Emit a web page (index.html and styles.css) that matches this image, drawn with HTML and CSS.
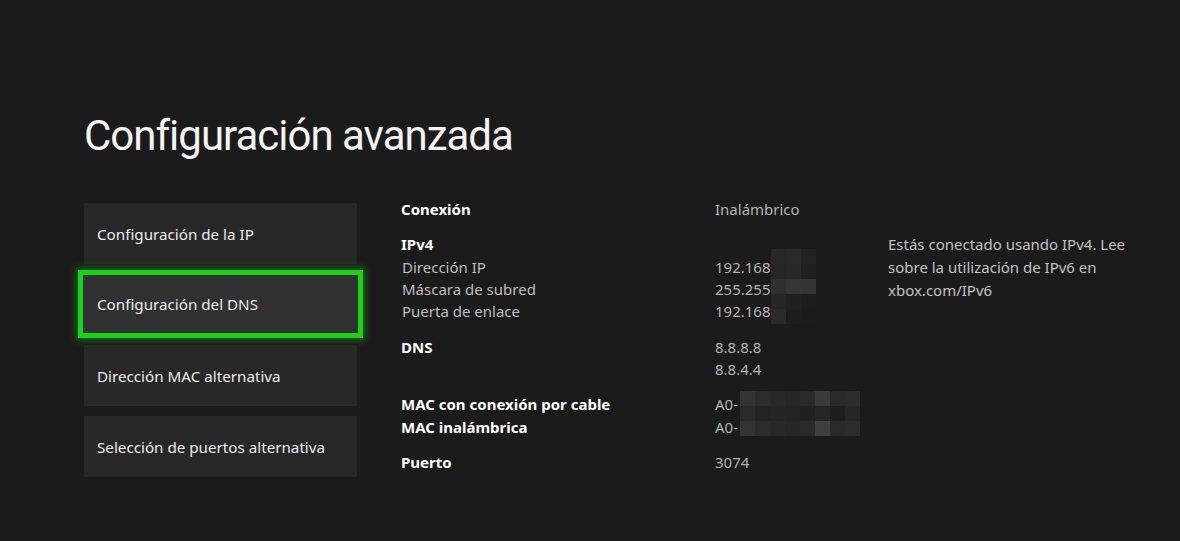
FILE: index.html
```html
<!DOCTYPE html>
<html lang="es">
<head>
<meta charset="utf-8">
<title>Configuración avanzada</title>
<link rel="stylesheet" href="styles.css">
</head>
<body>
<main class="page">
  <h1 class="title">Configuración avanzada</h1>
  <div class="content">
    <nav class="menu">
      <div class="item">Configuración de la IP</div>
      <div class="item selected">Configuración del DNS</div>
      <div class="item">Dirección MAC alternativa</div>
      <div class="item">Selección de puertos alternativa</div>
    </nav>
    <section class="details">
      <div class="group">
        <div class="label strong">Conexión</div>
        <div class="value">Inalámbrico</div>
      </div>
      <div class="group ipv4">
        <div class="label strong">IPv4</div>
        <div class="note">Estás conectado usando IPv4. Lee sobre la utilización de IPv6 en xbox.com/IPv6</div>
        <div class="label sub">Dirección IP</div>
        <div class="value">192.168</div>
        <div class="label sub">Máscara de subred</div>
        <div class="value">255.255</div>
        <div class="label sub">Puerta de enlace</div>
        <div class="value">192.168</div>
        <div class="mosaic mosaic-ip">
          <i class="m28"></i><i class="m2a"></i><i class="m22"></i>
          <i class="m26"></i><i class="m28"></i><i class="m1f"></i>
          <i class="m30"></i><i class="m36"></i><i class="m35"></i>
          <i class="m26"></i><i class="m20"></i><i class="m1d"></i>
          <i class="m2a"></i><i class="m1e"></i><i class="m1c"></i>
        </div>
      </div>
      <div class="group">
        <div class="label strong">DNS</div>
        <div class="value">8.8.8.8</div>
        <div class="label"></div>
        <div class="value">8.8.4.4</div>
      </div>
      <div class="group mac">
        <div class="label strong">MAC con conexión por cable</div>
        <div class="value">A0-</div>
        <div class="label strong">MAC inalámbrica</div>
        <div class="value">A0-</div>
        <div class="mosaic mosaic-mac">
          <i class="m33"></i><i class="m2c"></i><i class="m29"></i><i class="m26"></i><i class="m2a"></i><i class="m3a"></i><i class="m2a"></i><i class="m2c"></i>
          <i class="m2a"></i><i class="m22"></i><i class="m25"></i><i class="m24"></i><i class="m20"></i><i class="m26"></i><i class="m1e"></i><i class="m26"></i>
          <i class="m33"></i><i class="m2c"></i><i class="m29"></i><i class="m26"></i><i class="m2a"></i><i class="m3f"></i><i class="m2a"></i><i class="m2c"></i>
        </div>
      </div>
      <div class="group">
        <div class="label strong">Puerto</div>
        <div class="value">3074</div>
      </div>
    </section>
  </div>
</main>
</body>
</html>
```

FILE: styles.css
```css
html, body {
  margin: 0;
  padding: 0;
  background: #1b1b1b;
  height: 100%;
}
body {
  font-family: "Noto Sans", "Open Sans", sans-serif;
  color: #fff;
  overflow: hidden;
}
.page {
  padding: 110px 0 0 84px;
}
.title {
  margin: 0;
  font-family: Roboto, "Noto Sans", sans-serif;
  font-weight: 400;
  font-size: 42px;
  line-height: 52px;
  color: #f4f4f4;
  letter-spacing: -1px;
}
.content {
  display: flex;
  gap: 44px;
  margin-top: 41px;
}
.menu {
  width: 273px;
  display: flex;
  flex-direction: column;
  gap: 10px;
  flex: none;
}
.item {
  height: 61px;
  box-sizing: border-box;
  background: #282828;
  display: flex;
  align-items: center;
  padding-left: 13px;
  font-size: 15.2px;
  color: #ececec;
}
.item.selected {
  height: 68px;
  margin: -4px -6px -3px;
  padding-left: 14px;
  border: 5px solid #19d219;
  background: #313131;
  box-shadow: 0 0 7px 2px rgba(10, 200, 10, 0.5);
}
.details {
  margin-top: -5px;
  font-size: 15px;
  line-height: 22.4px;
  width: 280px;
}
.group {
  display: grid;
  grid-template-columns: 314px 173px 260px;
  margin-bottom: 12.8px;
  position: relative;
}
.label.strong {
  font-weight: 700;
  color: #fff;
}
.label.sub {
  color: #bebebe;
  padding-left: 1px;
}
.label { grid-column: 1; }
.value {
  grid-column: 2;
  color: #b3b3b3;
}
.note {
  grid-column: 3;
  grid-row: 1 / span 4;
  color: #c2c2c2;
  line-height: 23px;
}
.mosaic {
  position: absolute;
  display: grid;
  grid-auto-rows: 15px;
}
.mosaic i { display: block; }
.mosaic-ip {
  left: 370px;
  top: 16px;
  grid-template-columns: repeat(3, 15px);
}
.mosaic-mac {
  left: 339px;
  top: -2px;
  grid-template-columns: repeat(8, 15px);
}
.m1c { background: #1c1c1c; }
.m1d { background: #1d1d1d; }
.m1e { background: #1e1e1e; }
.m1f { background: #1f1f1f; }
.m20 { background: #202020; }
.m22 { background: #222222; }
.m24 { background: #242424; }
.m25 { background: #252525; }
.m26 { background: #262626; }
.m28 { background: #282828; }
.m29 { background: #292929; }
.m2a { background: #2a2a2a; }
.m2c { background: #2c2c2c; }
.m30 { background: #303030; }
.m33 { background: #333333; }
.m35 { background: #353535; }
.m36 { background: #363636; }
.m3a { background: #3a3a3a; }
.m3f { background: #3f3f3f; }
```
